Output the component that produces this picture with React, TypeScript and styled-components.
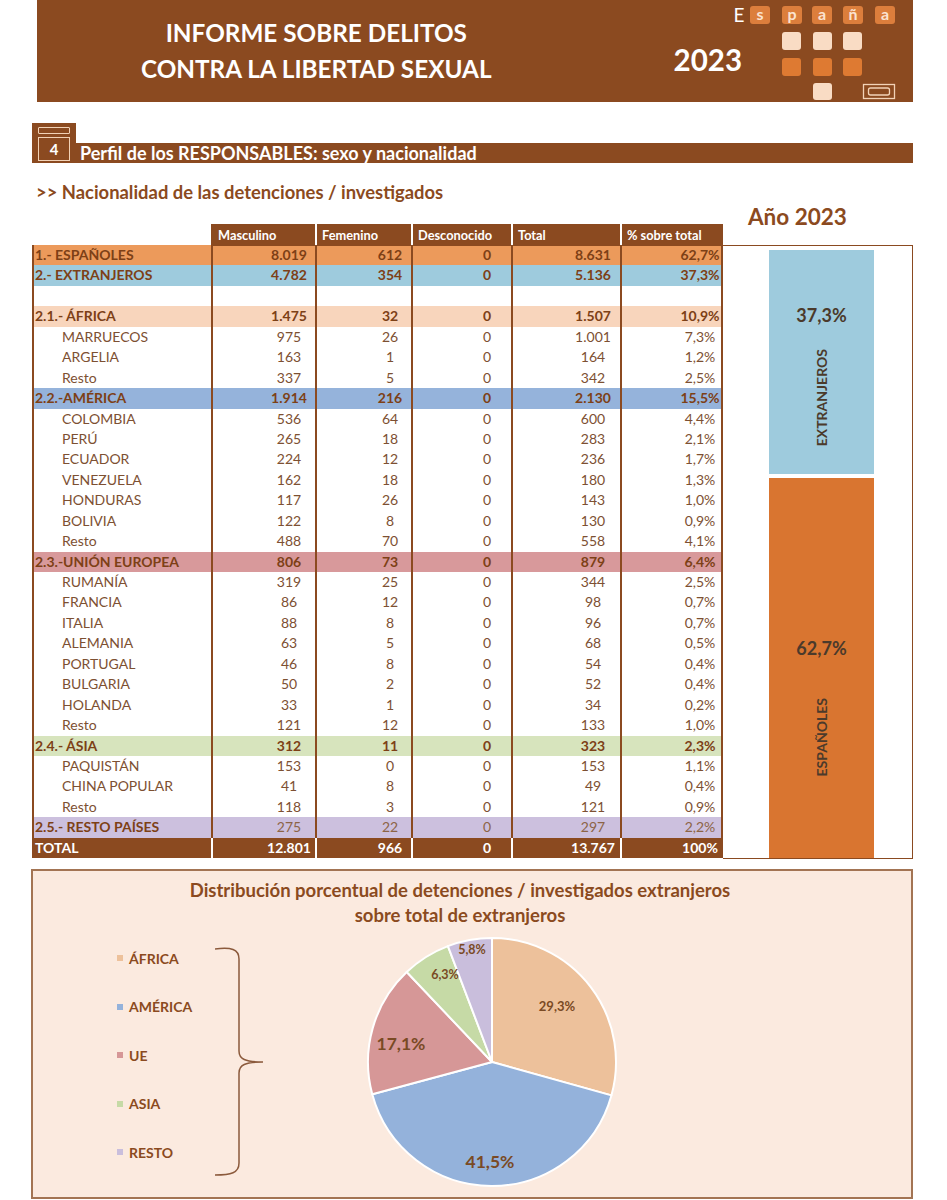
import React from "react";
import styled, { createGlobalStyle } from "styled-components";

const BROWN = "#8B4A20";
const TEXT_DARK = "#7D4016";
const TEXT_SUB = "#7D5032";

const GlobalStyle = createGlobalStyle`
  html, body { margin: 0; padding: 0; background: #fff; }
  body { font-family: Lato, "Open Sans", "DejaVu Sans", sans-serif; }
  * { box-sizing: border-box; }
`;

const Page = styled.div`
  width: 947px;
  height: 1200px;
  overflow: hidden;
  background: #fff;
`;

/* ---------- Header ---------- */
const Header = styled.header`
  margin-left: 37px;
  width: 876px;
  height: 102px;
  background: ${BROWN};
  display: flex;
  align-items: flex-start;
`;

const TitleBlock = styled.h1`
  margin: 0;
  width: 560px;
  height: 102px;
  display: flex;
  flex-direction: column;
  align-items: center;
  justify-content: center;
  color: #fff;
  font-size: 24.3px;
  font-weight: 700;
  line-height: 36px;
`;

const Year = styled.div`
  margin: 44px 0 0 78px;
  color: #fff;
  font-size: 29.5px;
  font-weight: 700;
  line-height: 32px;
`;

const LogoSvg = styled.svg`
  display: block;
  margin-left: -14px;
  flex: none;
`;

/* ---------- Section ---------- */
const SectionRow = styled.div`
  display: flex;
  align-items: flex-end;
  margin: 21px 0 0 32px;
  width: 881px;
  height: 40px;
`;

const NumberBox = styled.div`
  width: 44px;
  height: 40px;
  background: ${BROWN};
  padding: 4px 6px 2px;
  display: flex;
  flex-direction: column;
  gap: 3px;
`;

const NumberTab = styled.div`
  height: 7px;
  border: 1px solid #f2d2b6;
  border-radius: 1px;
`;

const NumberFrame = styled.div`
  flex: 1;
  border: 1px solid #f2d2b6;
  display: flex;
  align-items: center;
  justify-content: center;
  color: #fff;
  font-weight: 700;
  font-size: 15px;
`;

const SectionBar = styled.h2`
  margin: 0;
  flex: 1;
  height: 20px;
  background: ${BROWN};
  color: #fff;
  font-weight: 700;
  font-size: 18px;
  line-height: 20px;
  padding-left: 4px;
  white-space: nowrap;
`;

const Subtitle = styled.h3`
  margin: 17px 0 0 36px;
  height: 24px;
  color: ${BROWN};
  font-size: 18.4px;
  font-weight: 700;
  line-height: 24px;
`;

/* ---------- Table + bar chart ---------- */
const MainRow = styled.div`
  display: flex;
  margin-left: 32px;
  width: 881px;
`;

const TableWrap = styled.div`
  width: 691px;
  padding-top: 20px;
`;

const COLS = "179px 104px 96px 100px 109px 103px";

const HeadRow = styled.div`
  display: grid;
  grid-template-columns: ${COLS};
  height: 21px;
`;

const HeadCell = styled.div<{ $first?: boolean }>`
  background: ${(p) => (p.$first ? "transparent" : BROWN)};
  border-left: ${(p) => (p.$first ? "none" : "2px solid #fff")};
  color: #fff;
  font-size: 12.8px;
  font-weight: 700;
  line-height: 22px;
  padding-left: 5px;
  white-space: nowrap;
  &:nth-child(2) {
    border-left-color: ${BROWN};
  }
`;

type RowKind =
  | "es"
  | "ex"
  | "blank"
  | "af"
  | "am"
  | "ue"
  | "as"
  | "rp"
  | "sub"
  | "total";

const ROW_BG: Record<RowKind, string> = {
  es: "#EC9A5B",
  ex: "#9ECBDD",
  blank: "#FFFFFF",
  af: "#F8D5BC",
  am: "#95B3DB",
  ue: "#D8999B",
  as: "#D7E4BD",
  rp: "#CCC0DE",
  sub: "#FFFFFF",
  total: BROWN,
};

const BodyRow = styled.div<{ $bg: string }>`
  display: grid;
  grid-template-columns: ${COLS};
  height: 20.45px;
  background: ${(p) => p.$bg};
`;

const LabelCell = styled.div<{ $kind: RowKind }>`
  border-left: 2px solid ${BROWN};
  padding-left: ${(p) => (p.$kind === "sub" ? 28 : 1)}px;
  color: ${(p) =>
    p.$kind === "total" ? "#fff" : p.$kind === "sub" ? TEXT_SUB : TEXT_DARK};
  font-weight: ${(p) => (p.$kind === "sub" ? 400 : 700)};
  font-size: 14px;
  line-height: 20.4px;
  white-space: nowrap;
`;

const NumCell = styled.div<{ $kind: RowKind; $pl: number; $last?: boolean }>`
  border-left: 2px solid ${(p) => (p.$kind === "total" ? "#fff" : BROWN)};
  border-right: ${(p) => (p.$last ? `2px solid ${BROWN}` : "none")};
  padding-left: ${(p) => p.$pl}px;
  text-align: center;
  color: ${(p) =>
    p.$kind === "total"
      ? "#fff"
      : p.$kind === "sub"
      ? TEXT_SUB
      : p.$kind === "rp"
      ? "#8C6446"
      : TEXT_DARK};
  font-weight: ${(p) => (p.$kind === "sub" || p.$kind === "rp" ? 400 : 700)};
  font-size: 14px;
  line-height: 20.4px;
  white-space: nowrap;
`;

const ChartCol = styled.div`
  flex: 1;
  display: flex;
  flex-direction: column;
`;

const YearHeading = styled.div`
  height: 41px;
  padding-left: 25px;
  color: ${BROWN};
  font-size: 22.5px;
  font-weight: 700;
  line-height: 26px;
`;

const ChartBox = styled.div`
  height: 614px;
  border-top: 1.5px solid ${BROWN};
  border-right: 1.5px solid ${BROWN};
  border-bottom: 1.5px solid ${BROWN};
  padding: 4px 0 0 46px;
  display: flex;
  flex-direction: column;
  gap: 4px;
`;

const Bar = styled.div<{ $color: string; $pad: number; $gap: number }>`
  width: 105px;
  background: ${(p) => p.$color};
  display: flex;
  flex-direction: column;
  align-items: center;
  padding-top: ${(p) => p.$pad}px;
  gap: ${(p) => p.$gap}px;
  color: #4b3a2b;
  font-weight: 700;
`;

const BarValue = styled.div`
  font-size: 18px;
  line-height: 20px;
`;

const BarLabel = styled.div`
  writing-mode: vertical-rl;
  transform: rotate(180deg);
  font-size: 14px;
  line-height: 16px;
`;

/* ---------- Pie panel ---------- */
const PiePanel = styled.section`
  margin: 10px 0 0 31px;
  width: 882px;
  height: 330px;
  border: 2px solid #a37453;
  background: #fbeadf;
  padding-top: 7px;
`;

const PieTitle = styled.h4`
  margin: 0;
  padding-right: 24px;
  text-align: center;
  color: ${BROWN};
  font-size: 18.5px;
  font-weight: 700;
  line-height: 25px;
`;

const PieBody = styled.div`
  display: flex;
  align-items: flex-start;
`;

const Legend = styled.ul`
  list-style: none;
  margin: 20px 0 0 84px;
  padding: 0;
  width: 98px;
  display: flex;
  flex-direction: column;
  gap: 28.5px;
`;

const LegendItem = styled.li`
  display: flex;
  align-items: center;
  gap: 6px;
  height: 20px;
  color: ${BROWN};
  font-size: 14px;
  font-weight: 700;
`;

const Swatch = styled.span<{ $color: string }>`
  width: 6px;
  height: 6px;
  background: ${(p) => p.$color};
`;

const BraceSvg = styled.svg`
  display: block;
  margin-top: 19px;
  flex: none;
`;

const PieSvg = styled.svg`
  display: block;
  margin: 4px 0 0 97px;
  flex: none;
  overflow: visible;
`;

const DATA: [RowKind, string, string[]][] = [
  ["es", "1.- ESPAÑOLES", ["8.019", "612", "0", "8.631", "62,7%"]],
  ["ex", "2.- EXTRANJEROS", ["4.782", "354", "0", "5.136", "37,3%"]],
  ["blank", "", ["", "", "", "", ""]],
  ["af", "2.1.- ÁFRICA", ["1.475", "32", "0", "1.507", "10,9%"]],
  ["sub", "MARRUECOS", ["975", "26", "0", "1.001", "7,3%"]],
  ["sub", "ARGELIA", ["163", "1", "0", "164", "1,2%"]],
  ["sub", "Resto", ["337", "5", "0", "342", "2,5%"]],
  ["am", "2.2.-AMÉRICA", ["1.914", "216", "0", "2.130", "15,5%"]],
  ["sub", "COLOMBIA", ["536", "64", "0", "600", "4,4%"]],
  ["sub", "PERÚ", ["265", "18", "0", "283", "2,1%"]],
  ["sub", "ECUADOR", ["224", "12", "0", "236", "1,7%"]],
  ["sub", "VENEZUELA", ["162", "18", "0", "180", "1,3%"]],
  ["sub", "HONDURAS", ["117", "26", "0", "143", "1,0%"]],
  ["sub", "BOLIVIA", ["122", "8", "0", "130", "0,9%"]],
  ["sub", "Resto", ["488", "70", "0", "558", "4,1%"]],
  ["ue", "2.3.-UNIÓN EUROPEA", ["806", "73", "0", "879", "6,4%"]],
  ["sub", "RUMANÍA", ["319", "25", "0", "344", "2,5%"]],
  ["sub", "FRANCIA", ["86", "12", "0", "98", "0,7%"]],
  ["sub", "ITALIA", ["88", "8", "0", "96", "0,7%"]],
  ["sub", "ALEMANIA", ["63", "5", "0", "68", "0,5%"]],
  ["sub", "PORTUGAL", ["46", "8", "0", "54", "0,4%"]],
  ["sub", "BULGARIA", ["50", "2", "0", "52", "0,4%"]],
  ["sub", "HOLANDA", ["33", "1", "0", "34", "0,2%"]],
  ["sub", "Resto", ["121", "12", "0", "133", "1,0%"]],
  ["as", "2.4.- ÁSIA", ["312", "11", "0", "323", "2,3%"]],
  ["sub", "PAQUISTÁN", ["153", "0", "0", "153", "1,1%"]],
  ["sub", "CHINA POPULAR", ["41", "8", "0", "49", "0,4%"]],
  ["sub", "Resto", ["118", "3", "0", "121", "0,9%"]],
  ["rp", "2.5.- RESTO PAÍSES", ["275", "22", "0", "297", "2,2%"]],
  ["total", "TOTAL", ["12.801", "966", "0", "13.767", "100%"]],
];

const HEADERS = ["Masculino", "Femenino", "Desconocido", "Total", "% sobre total"];
const NUM_PAD = [50, 52, 50, 53, 57];

const SLICES = [
  { label: "ÁFRICA", value: 1507, color: "#EDC19B" },
  { label: "AMÉRICA", value: 2130, color: "#94B2DB" },
  { label: "UE", value: 879, color: "#D69797" },
  { label: "ASIA", value: 323, color: "#C6DAA6" },
  { label: "RESTO", value: 297, color: "#C9BEDC" },
];

const PIE_LABELS = [
  { text: "29,3%", x: 195, y: 74, size: 13 },
  { text: "41,5%", x: 128, y: 229, size: 17.5 },
  { text: "17,1%", x: 39, y: 111, size: 17.5 },
  { text: "6,3%", x: 83, y: 42, size: 12.5 },
  { text: "5,8%", x: 110, y: 17, size: 12.5 },
];

function polar(cx: number, cy: number, r: number, deg: number) {
  const a = (deg * Math.PI) / 180;
  return [cx + r * Math.sin(a), cy - r * Math.cos(a)];
}

function Logo() {
  const letters = [
    { ch: "s", x: 22 },
    { ch: "p", x: 54 },
    { ch: "a", x: 84 },
    { ch: "ñ", x: 115 },
    { ch: "a", x: 147 },
  ];
  const cols = [54, 85, 115];
  return (
    <LogoSvg width="185" height="102" viewBox="0 0 185 102">
      <text x="11" y="22" fill="#fff" fontSize="19" fontFamily="Lato, sans-serif" textAnchor="middle">
        E
      </text>
      {letters.map((l, i) => (
        <g key={i}>
          <rect x={l.x} y={6} width={20} height={18} rx={3} fill="#DC7E3C" />
          <text
            x={l.x + 10}
            y={20}
            fill="#FBE3D0"
            fontSize="16"
            fontWeight="700"
            fontFamily="Lato, sans-serif"
            textAnchor="middle"
          >
            {l.ch}
          </text>
        </g>
      ))}
      {cols.map((x) => (
        <rect key={"l" + x} x={x} y={32} width={19} height={18} rx={3} fill="#F9DCC4" />
      ))}
      {cols.map((x) => (
        <rect key={"o" + x} x={x} y={58} width={19} height={18} rx={3} fill="#DE7A32" />
      ))}
      <rect x={85} y={83} width={19} height={17} rx={3} fill="#F9DCC4" />
      <rect x={135.5} y={84.5} width={31} height={14} fill="none" stroke="#F2D2B6" strokeWidth="1.3" />
      <rect x={140.5} y={88} width={21} height={7} rx={2} fill="none" stroke="#F2D2B6" strokeWidth="1.3" />
    </LogoSvg>
  );
}

function Pie() {
  const total = SLICES.reduce((s, x) => s + x.value, 0);
  const cx = 130;
  const cy = 130;
  const r = 124;
  let acc = 0;
  const paths = SLICES.map((s) => {
    const start = (acc / total) * 360;
    acc += s.value;
    const end = (acc / total) * 360;
    const [x1, y1] = polar(cx, cy, r, start);
    const [x2, y2] = polar(cx, cy, r, end);
    const large = end - start > 180 ? 1 : 0;
    return (
      <path
        key={s.label}
        d={`M${cx},${cy} L${x1},${y1} A${r},${r} 0 ${large} 1 ${x2},${y2} Z`}
        fill={s.color}
        stroke="#fff"
        strokeWidth="2"
        strokeLinejoin="round"
      />
    );
  });
  return (
    <PieSvg width="260" height="260" viewBox="0 0 260 260">
      {paths}
      {PIE_LABELS.map((l) => (
        <text
          key={l.text}
          x={l.x}
          y={l.y}
          fill="#7A4A24"
          fontSize={l.size}
          fontWeight="700"
          fontFamily="Lato, sans-serif"
          textAnchor="middle"
          dominantBaseline="central"
        >
          {l.text}
        </text>
      ))}
    </PieSvg>
  );
}

export default function App() {
  return (
    <Page>
      <GlobalStyle />
      <Header>
        <TitleBlock>
          <span>INFORME SOBRE DELITOS</span>
          <span>CONTRA LA LIBERTAD SEXUAL</span>
        </TitleBlock>
        <Year>2023</Year>
        <Logo />
      </Header>

      <SectionRow>
        <NumberBox>
          <NumberTab />
          <NumberFrame>4</NumberFrame>
        </NumberBox>
        <SectionBar>Perfil de los RESPONSABLES: sexo y nacionalidad</SectionBar>
      </SectionRow>

      <Subtitle>&gt;&gt; Nacionalidad de las detenciones / investigados</Subtitle>

      <MainRow>
        <TableWrap>
          <HeadRow>
            <HeadCell $first />
            {HEADERS.map((h) => (
              <HeadCell key={h}>{h}</HeadCell>
            ))}
          </HeadRow>
          {DATA.map(([kind, label, nums], i) => (
            <BodyRow key={i} $bg={ROW_BG[kind]}>
              <LabelCell $kind={kind}>{label}</LabelCell>
              {nums.map((n, j) => (
                <NumCell key={j} $kind={kind} $pl={NUM_PAD[j]} $last={j === 4}>
                  {n}
                </NumCell>
              ))}
            </BodyRow>
          ))}
        </TableWrap>

        <ChartCol>
          <YearHeading>Año 2023</YearHeading>
          <ChartBox>
            <Bar $color="#9ECBDD" $pad={55} $gap={24} style={{ height: 224 }}>
              <BarValue>37,3%</BarValue>
              <BarLabel>EXTRANJEROS</BarLabel>
            </Bar>
            <Bar $color="#D97530" $pad={160} $gap={40} style={{ height: 380 }}>
              <BarValue>62,7%</BarValue>
              <BarLabel>ESPAÑOLES</BarLabel>
            </Bar>
          </ChartBox>
        </ChartCol>
      </MainRow>

      <PiePanel>
        <PieTitle>
          Distribución porcentual de detenciones / investigados extranjeros
          <br />
          sobre total de extranjeros
        </PieTitle>
        <PieBody>
          <Legend>
            {SLICES.map((s) => (
              <LegendItem key={s.label}>
                <Swatch $color={s.color} />
                {s.label}
              </LegendItem>
            ))}
          </Legend>
          <BraceSvg width="50" height="230" viewBox="0 0 50 230">
            <path
              d="M0,2 C16,0 24,2 24,12 L24,104 C24,112 30,115 48,115 C30,115 24,118 24,126 L24,216 C24,226 16,228 0,228"
              fill="none"
              stroke="#8B5A3C"
              strokeWidth="1.5"
            />
          </BraceSvg>
          <Pie />
        </PieBody>
      </PiePanel>
    </Page>
  );
}
